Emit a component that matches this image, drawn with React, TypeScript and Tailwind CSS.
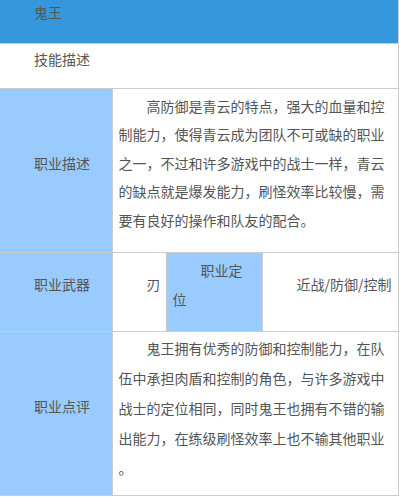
import React from 'react';

const cell = 'border border-[#cccccc] px-[6px] py-[3px] align-middle';
const para = 'indent-[2em] leading-[28.5px] mb-[15px]';

function Para({ children }: { children: React.ReactNode }) {
  return <p className={para}>{children}</p>;
}

export default function App() {
  return (
    <div
      className="w-[399px] h-[497px] overflow-hidden bg-white text-[14px] text-[#555555]"
      style={{ fontFamily: '"Microsoft YaHei", "Noto Sans CJK SC", sans-serif' }}
    >
      <table className="w-[398px] table-fixed border-collapse">
        <colgroup>
          <col className="w-[112px]" />
          <col className="w-[54px]" />
          <col className="w-[96px]" />
          <col className="w-[136px]" />
        </colgroup>
        <tbody>
          <tr className="h-[43px]">
            <td colSpan={4} className="border border-l-0 border-t-0 border-[#cccccc] bg-[#3598dc] px-[6px] pt-0 align-top">
              <p className="indent-[2em] leading-[25px]">鬼王</p>
            </td>
          </tr>
          <tr className="h-[45px]">
            <td colSpan={4} className={cell + ' border-l-0 pt-[1px] align-top'}>
              <p className="indent-[2em] leading-[28px]">技能描述</p>
            </td>
          </tr>
          <tr className="h-[164px]">
            <td className={cell + ' border-l-0 bg-[#99cbfe]'}>
              <Para>职业描述</Para>
            </td>
            <td colSpan={3} className={cell + ' pr-[12px]'}>
              <Para>
                高防御是青云的特点，强大的血量和控制能力，使得青云成为团队不可或缺的职业之一，不过和许多游戏中的战士一样，青云的缺点就是爆发能力，刷怪效率比较慢，需要有良好的操作和队友的配合。
              </Para>
            </td>
          </tr>
          <tr className="h-[77px]">
            <td className={cell + ' border-l-0 bg-[#99cbfe]'}>
              <Para>职业武器</Para>
            </td>
            <td className={cell}>
              <Para>刃</Para>
            </td>
            <td className={cell + ' bg-[#99cbfe]'}>
              <Para>职业定位</Para>
            </td>
            <td className={cell}>
              <Para>近战/防御/控制</Para>
            </td>
          </tr>
          <tr className="h-[164px]">
            <td className={cell + ' border-l-0 bg-[#99cbfe]'}>
              <Para>职业点评</Para>
            </td>
            <td colSpan={3} className={cell + ' pr-[12px] pt-[1px] align-top'}>
              <p className="indent-[2em] leading-[30px]">
                鬼王拥有优秀的防御和控制能力，在队伍中承担肉盾和控制的角色，与许多游戏中战士的定位相同，同时鬼王也拥有不错的输出能力，在练级刷怪效率上也不输其他职业
                <br />。
              </p>
            </td>
          </tr>
        </tbody>
      </table>
    </div>
  );
}
